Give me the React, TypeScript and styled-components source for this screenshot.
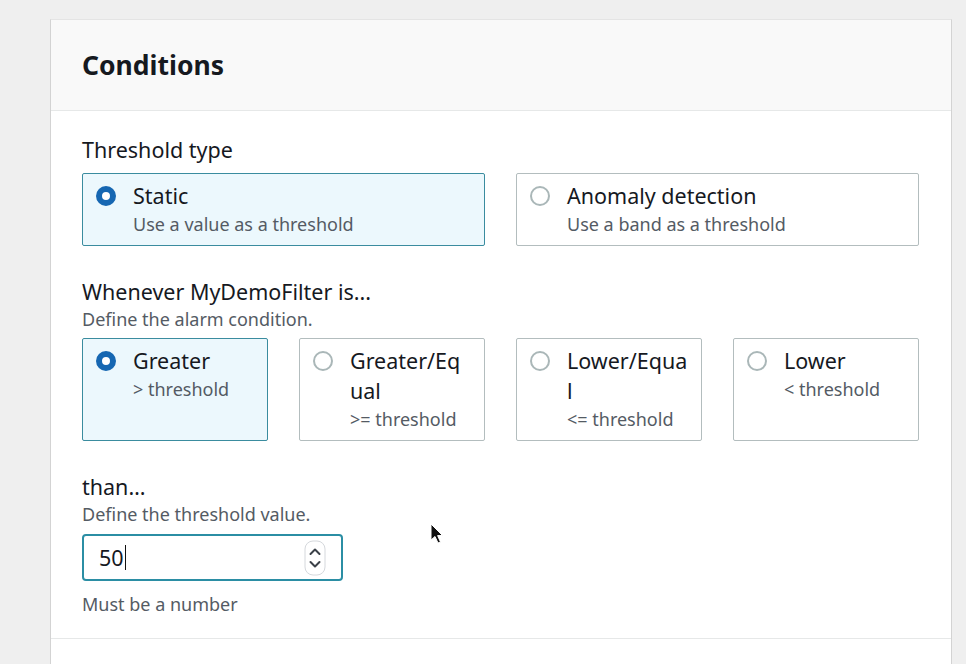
import styled, { createGlobalStyle } from 'styled-components';

interface IOption {
  id: string;
  title: string;
  hint: string;
}

const thresholdTypes: IOption[] = [
  { id: 'static', title: 'Static', hint: 'Use a value as a threshold' },
  { id: 'anomaly', title: 'Anomaly detection', hint: 'Use a band as a threshold' },
];

const operators: IOption[] = [
  { id: 'gt', title: 'Greater', hint: '> threshold' },
  { id: 'gte', title: 'Greater/Equal', hint: '>= threshold' },
  { id: 'lte', title: 'Lower/Equal', hint: '<= threshold' },
  { id: 'lt', title: 'Lower', hint: '< threshold' },
];

const TileGroup = ({ options, selected, columns }: { options: IOption[]; selected: string; columns: number }) => (
  <TileGrid $columns={columns}>
    {options.map((opt) => (
      <Tile key={opt.id} $selected={opt.id === selected}>
        <Radio $checked={opt.id === selected} />
        <TileText>
          <TileTitle>{opt.title}</TileTitle>
          <TileHint>{opt.hint}</TileHint>
        </TileText>
      </Tile>
    ))}
  </TileGrid>
);

const App = () => {
  return (
    <Page>
      <GlobalStyle />
      <Card>
        <Header>
          <Title>Conditions</Title>
        </Header>
        <Body>
          <Field>
            <Label>Threshold type</Label>
            <TileGroup options={thresholdTypes} selected="static" columns={2} />
          </Field>
          <Field>
            <Label>Whenever MyDemoFilter is...</Label>
            <Description>Define the alarm condition.</Description>
            <TileGroup options={operators} selected="gt" columns={4} />
          </Field>
          <Field>
            <Label>than…</Label>
            <Description>Define the threshold value.</Description>
            <NumberBox>
              <Value>
                50
                <Caret />
              </Value>
              <svg width="22" height="36" viewBox="0 0 22 36">
                <rect x="1" y="1" width="20" height="34" rx="8" fill="none" stroke="#d5d8dc" strokeWidth="1" />
                <path d="M6.5 14 L11 9.5 L15.5 14" fill="none" stroke="#3b4148" strokeWidth="2" strokeLinecap="round" strokeLinejoin="round" />
                <path d="M6.5 22 L11 26.5 L15.5 22" fill="none" stroke="#3b4148" strokeWidth="2" strokeLinecap="round" strokeLinejoin="round" />
              </svg>
            </NumberBox>
            <Constraint>Must be a number</Constraint>
            <Pointer width="14" height="22" viewBox="0 0 14 22">
              <path d="M1 1 L1 17 L5 13.5 L8 20 L10.5 19 L7.6 12.6 L12.5 12.5 Z" fill="#111" stroke="#fff" strokeWidth="1" />
            </Pointer>
          </Field>
        </Body>
        <Footer />
      </Card>
    </Page>
  );
};

const GlobalStyle = createGlobalStyle`
  body {
    margin: 0;
    background: #efefef;
    font-family: 'Noto Sans', 'Open Sans', sans-serif;
    color: #16191f;
  }
`;

const Page = styled.div`
  height: 100vh;
  overflow: hidden;
  padding: 19px 0 0 50px;
  box-sizing: border-box;
`;

const Card = styled.div`
  width: 902px;
  box-sizing: border-box;
  background: #fff;
  border: 1px solid #d3d3d3;
  border-top-color: #e4e4e4;
`;

const Header = styled.header`
  background: #f9f9f9;
  padding: 29px 31px 29px;
  border-bottom: 1px solid #e6e8e8;
`;

const Title = styled.h2`
  margin: 0;
  font-size: 26.5px;
  line-height: 32px;
  font-weight: 700;
`;

const Body = styled.div`
  padding: 25px 32px 21px 31px;
  border-bottom: 1px solid #e6e8e8;
`;

const Field = styled.div`
  position: relative;
  & + & {
    margin-top: 32px;
  }
`;

const Label = styled.div`
  font-size: 21.5px;
  line-height: 28px;
`;

const Description = styled.div`
  font-size: 18px;
  line-height: 26px;
  color: #545b64;
`;

const TileGrid = styled.div<{ $columns: number }>`
  display: grid;
  grid-template-columns: repeat(${(p) => p.$columns}, 1fr);
  column-gap: 31px;
  margin-top: ${(p) => (p.$columns === 2 ? 9 : 6)}px;
`;

const Tile = styled.div<{ $selected: boolean }>`
  display: flex;
  align-items: flex-start;
  gap: 17px;
  padding: 7px 12px 8px 13px;
  border: 1px solid ${(p) => (p.$selected ? '#3a8c9f' : '#b3bdbe')};
  background: ${(p) => (p.$selected ? '#ecf8fd' : '#fff')};
  border-radius: 2px;
`;

const Radio = styled.span<{ $checked: boolean }>`
  flex: none;
  width: 20px;
  height: 20px;
  margin-top: 5px;
  box-sizing: border-box;
  border-radius: 50%;
  background: #fff;
  border: ${(p) => (p.$checked ? '6.5px solid #1667b2' : '2px solid #aab7b8')};
`;

const TileText = styled.div`
  min-width: 0;
  flex: 1;
`;

const TileTitle = styled.div`
  font-size: 21.5px;
  line-height: 30px;
  word-break: break-all;
`;

const TileHint = styled.div`
  font-size: 18px;
  line-height: 26px;
  color: #545b64;
`;

const NumberBox = styled.div`
  margin-top: 7px;
  width: 261px;
  height: 47px;
  box-sizing: border-box;
  border: 2px solid #2b8ea4;
  border-radius: 4px;
  display: flex;
  align-items: center;
  justify-content: space-between;
  padding: 0 15px 0 15px;
`;

const Value = styled.span`
  display: flex;
  align-items: center;
  font-size: 21.5px;
`;

const Caret = styled.span`
  width: 1px;
  height: 25px;
  margin-left: 1px;
  background: #111;
`;

const Constraint = styled.div`
  margin-top: 10px;
  font-size: 18px;
  line-height: 26px;
  color: #545b64;
`;

const Pointer = styled.svg`
  position: absolute;
  left: 348px;
  top: 50px;
`;

const Footer = styled.div`
  height: 40px;
  background: #fff;
`;

export default App;
